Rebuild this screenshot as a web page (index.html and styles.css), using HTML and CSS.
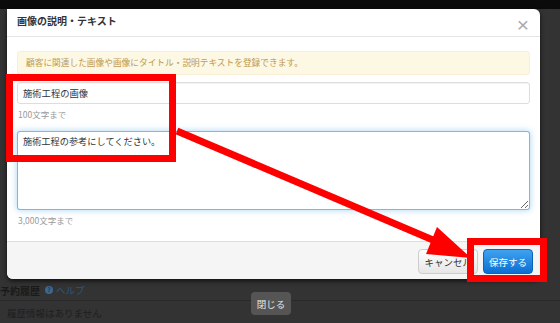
FILE: index.html
```html
<html>
<head>
<title>画像の説明・テキスト</title>
<link rel="stylesheet" href="styles.css">
</head>
<body>

<div class="topbar"></div>

<div class="modal">
    <div class="modal-header">
        <h3 class="modal-title">画像の説明・テキスト</h3>
        <span class="close">×</span>
    </div>
    <div class="modal-body">
        <div class="alert">顧客に関連した画像や画像にタイトル・説明テキストを登録できます。</div>
        <input type="text" class="field" value="施術工程の画像">
        <p class="help">100文字まで</p>
        <textarea class="field area">施術工程の参考にしてください。</textarea>
        <p class="help">3,000文字まで</p>
    </div>
    <div class="modal-footer">
        <button class="btn">キャンセル</button>
        <button class="btn btn-primary">保存する</button>
    </div>
</div>

<div class="history">
    <div class="history-head">
        <span class="history-title">予約履歴</span>
        <span class="help-icon">?</span>
        <span class="help-link">ヘルプ</span>
    </div>
    <div class="history-body">履歴情報はありません</div>
</div>

<button class="lightbox-close">閉じる</button>

<svg class="marks" width="560" height="323" viewBox="0 0 560 323">
    <rect x="9.5" y="77.5" width="163" height="81" fill="none" stroke="#ff0000" stroke-width="7"/>
    <rect x="470.5" y="241.5" width="73" height="37" fill="none" stroke="#ff0000" stroke-width="7"/>
    <line x1="177" y1="131" x2="440" y2="243" stroke="#ff0000" stroke-width="7"/>
    <polygon points="471,258 437,227 426,254" fill="#ff0000"/>
</svg>

</body>
</html>
```

FILE: styles.css
```css
body {
    margin: 0;
    width: 560px;
    height: 323px;
    overflow: hidden;
    position: relative;
    background-color: #333;
    font-family: "Noto Sans CJK JP", "Liberation Sans", sans-serif;
}

.topbar {
    height: 9px;
    background-color: #0b0b0b;
}

.modal {
    margin-left: 7px;
    width: 533px;
    background-color: #fff;
    border-radius: 0 6px 6px 6px;
    box-shadow: 0 2px 5px rgba(0, 0, 0, 0.7);
}

.modal-header {
    display: flex;
    justify-content: space-between;
    align-items: center;
    height: 16px;
    padding: 4px 11px 7px 10px;
    border-bottom: 1px solid #e5e5e5;
}

.modal-title {
    margin: 0;
    font-size: 10px;
    line-height: 16px;
    font-weight: bold;
    color: #333;
}

.close {
    padding-top: 8px;
    font-family: "Liberation Sans", sans-serif;
    font-size: 21px;
    line-height: 12px;
    color: #aaa;
}

.modal-body {
    padding: 14px 10px 15px 10px;
}

.alert {
    padding: 5px 8px;
    font-size: 8.7px;
    line-height: 12px;
    color: #c09853;
    background-color: #fcf8e3;
    border: 1px solid #fbeed5;
    border-radius: 3px;
    margin-bottom: 7px;
}

.field {
    display: block;
    box-sizing: border-box;
    width: 513px;
    height: 22px;
    margin: 0;
    padding: 0 5px;
    font-family: "Noto Sans CJK JP", sans-serif;
    font-size: 9.3px;
    color: #333;
    border: 1px solid #ddd;
    border-radius: 3px;
    box-shadow: inset 0 1px 1px rgba(0, 0, 0, 0.05);
}

.area {
    height: 79px;
    padding: 3px 5px;
    line-height: 13px;
    font-size: 9.2px;
    border-color: rgba(82, 168, 236, 0.8);
    box-shadow: 0 0 6px rgba(82, 168, 236, 0.5);
    resize: vertical;
    outline: none;
}

.help {
    margin: 4px 0 0 1px;
    font-size: 8.5px;
    line-height: 12px;
    color: #999;
}

.help + .field {
    margin-top: 11px;
}

.modal-footer {
    display: flex;
    justify-content: flex-end;
    gap: 5px;
    padding: 7px 7px 5px 0;
    background-color: #f5f5f5;
    border-top: 1px solid #ddd;
    border-radius: 0 0 6px 6px;
}

.btn {
    height: 25px;
    padding: 0 5px;
    white-space: nowrap;
    font-family: "Noto Sans CJK JP", sans-serif;
    font-size: 9.5px;
    color: #333;
    background: linear-gradient(#ffffff, #e6e6e6);
    border: 1px solid #ccc;
    border-radius: 4px;
}

.btn-primary {
    color: #fff;
    background: linear-gradient(#3ea2f1, #0b6fd2);
    border-color: #0a62bb;
}

.history {
    color: #1c1c1c;
}

.history-head {
    display: flex;
    align-items: center;
    gap: 3px;
    height: 20px;
    padding-top: 1px;
    border-bottom: 1px solid #2a2a2a;
}

.history-title {
    font-size: 10px;
    font-weight: bold;
    color: #1a1a1a;
}

.help-icon {
    width: 8px;
    height: 8px;
    margin-left: 2px;
    border-radius: 50%;
    background-color: #3b6690;
    color: #333;
    font-size: 6px;
    line-height: 8px;
    text-align: center;
    font-weight: bold;
}

.help-link {
    font-size: 9.5px;
    color: #2c5580;
}

.history-body {
    padding: 5px 0 0 7px;
    font-size: 9.5px;
    color: #1e1e1e;
}

.lightbox-close {
    position: absolute;
    left: 251px;
    top: 292px;
    width: 40px;
    height: 23px;
    padding: 0;
    font-family: "Noto Sans CJK JP", sans-serif;
    font-size: 9.5px;
    color: #e4e4e4;
    background-color: #555;
    border: none;
    border-radius: 4px;
}

.marks {
    position: absolute;
    left: 0;
    top: 0;
}
```
